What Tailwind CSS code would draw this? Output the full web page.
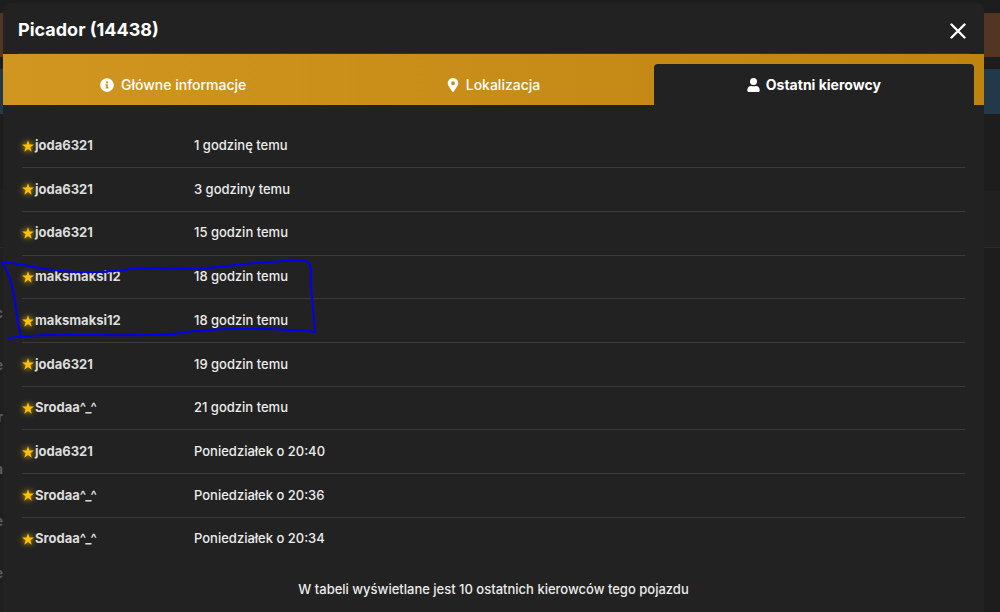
<!DOCTYPE html>
<html lang="pl">
  <head>
    <meta charset="UTF-8" />
    <meta name="viewport" content="width=device-width, initial-scale=1.0" />
    <title>Picador (14438)</title>
    <script src="https://cdn.jsdelivr.net/npm/@tailwindcss/browser@4"></script>
  </head>
  <body
    class="relative h-screen overflow-hidden bg-[#1d1d1d] font-['Inter',sans-serif] text-[13px] font-medium text-[#ececec]"
  >
    <!-- Strona pod oknem -->
    <div class="flex h-full flex-col pt-[13px]" aria-hidden="true">
      <div class="h-11 bg-[#533524]"></div>
      <div class="mt-3 h-[45px] bg-[#233848]"></div>
      <div class="mt-[77px] h-[57px] shrink-0 border-b border-[#2b2b2b] bg-[#202020]"></div>
      <div class="flex w-[3px] grow flex-col items-end gap-8 overflow-hidden bg-[#1f1f1f] pt-[55px] font-bold leading-5 text-[#5c5c5c]">
        <span>c</span>
        <span>e</span>
        <span>r</span>
        <span>a</span>
        <span>e</span>
        <span>e</span>
      </div>
    </div>

    <!-- Okno pojazdu -->
    <div
      role="dialog"
      aria-labelledby="tytul"
      class="absolute inset-y-0 left-[3px] right-4 top-[3px] flex flex-col rounded-t-lg bg-[#222222]"
    >
      <header
        class="mx-[15px] flex h-[51px] items-center justify-between border-b border-[#333333] pt-1"
      >
        <h1 id="tytul" class="text-lg font-bold text-white">Picador (14438)</h1>
        <button type="button" aria-label="Zamknij" class="p-[3px] pt-[5px] text-white">
          <svg class="size-4" viewBox="0 0 16 16" fill="none" stroke="currentColor" stroke-width="2.4" stroke-linecap="round">
            <path d="M1.5 1.5 14.5 14.5M14.5 1.5 1.5 14.5" />
          </svg>
        </button>
      </header>

      <nav
        class="grid h-[51px] grid-cols-3 bg-linear-to-r from-[#d1961f] to-[#bf840f] px-[10px] pt-[10px] text-sm text-white"
      >
        <a href="#informacje" class="flex items-center justify-center gap-[7px]">
          <svg class="size-[14px]" viewBox="0 0 512 512" fill="currentColor">
            <path
              fill-rule="evenodd"
              d="M256 8C119 8 8 119 8 256s111 248 248 248 248-111 248-248S393 8 256 8zm0 110a42 42 0 1 1 0 84 42 42 0 0 1 0-84zm56 254c0 7-5 12-12 12h-88c-7 0-12-5-12-12v-24c0-7 5-12 12-12h12v-64h-12c-7 0-12-5-12-12v-24c0-7 5-12 12-12h64c7 0 12 5 12 12v100h12c7 0 12 5 12 12z"
            />
          </svg>
          Główne informacje
        </a>
        <a href="#lokalizacja" class="flex items-center justify-center gap-[7px]">
          <svg class="h-[14px] w-[12px]" viewBox="0 0 384 512" fill="currentColor">
            <path
              fill-rule="evenodd"
              d="M172 502C27 291 0 270 0 192 0 86 86 0 192 0s192 86 192 192c0 78-27 99-172 310-10 13-30 13-40 0zm20-240a70 70 0 1 0 0-140 70 70 0 0 0 0 140z"
            />
          </svg>
          Lokalizacja
        </a>
        <a
          href="#kierowcy"
          aria-current="page"
          class="flex items-center justify-center gap-[6px] rounded-t bg-[#222222] font-bold"
        >
          <svg class="h-[14px] w-[13px]" viewBox="0 0 448 512" fill="currentColor">
            <path
              d="M224 256a128 128 0 1 0 0-256 128 128 0 0 0 0 256zm90 32h-17a174 174 0 0 1-146 0h-17C60 288 0 348 0 422v42c0 27 22 48 48 48h352c27 0 48-21 48-48v-42c0-74-60-134-134-134z"
            />
          </svg>
          Ostatni kierowcy
        </a>
      </nav>

      <main class="relative px-[19px] pt-5">
        <table class="h-[435px] w-full table-fixed">
          <tbody id="kierowcy" class="divide-y divide-[#3a3a3a]"></tbody>
        </table>

        <!-- Odręczne zaznaczenie -->
        <svg
          class="pointer-events-none absolute left-[-3px] top-[151px]"
          width="320"
          height="84"
          viewBox="0 256 320 84"
          fill="none"
          stroke="#0000f5"
          stroke-width="2"
          stroke-linecap="round"
          stroke-linejoin="round"
        >
          <path
            d="M2 263C12 262 19 264 28 266C45 269 60 272 84 272C100 272 118 272 129 269C150 267 176 269 195 269C225 267 250 263 270 262C285 261 302 259 308 262C313 265 310 279 311 288L315 332C300 330 270 329 240 329C215 329 190 331 174 334C140 336 100 335 70 335C45 335 30 335 9 338"
          />
          <path d="M2 263C10 273 13 288 15 302C17 316 18 326 21 336" />
        </svg>
      </main>

      <p class="mt-5 text-center">
        W tabeli wyświetlane jest 10 ostatnich kierowców tego pojazdu
      </p>
    </div>

    <script>
      const kierowcy = [
        ["joda6321", "1 godzinę temu"],
        ["joda6321", "3 godziny temu"],
        ["joda6321", "15 godzin temu"],
        ["maksmaksi12", "18 godzin temu"],
        ["maksmaksi12", "18 godzin temu"],
        ["joda6321", "19 godzin temu"],
        ["Srodaa^_^", "21 godzin temu"],
        ["joda6321", "Poniedziałek o 20:40"],
        ["Srodaa^_^", "Poniedziałek o 20:36"],
        ["Srodaa^_^", "Poniedziałek o 20:34"],
      ];

      document.getElementById("kierowcy").innerHTML = kierowcy
        .map(
          ([nick, czas]) => `
          <tr>
            <th scope="row" class="w-[172px] text-left font-bold text-[#dcdcdc]">
              <span class="flex items-center gap-px">
                <svg class="size-3 overflow-visible drop-shadow-[0_0_3px_#ffc107]" viewBox="0 0 22 21" fill="#ffc107">
                  <path d="M11 0l2.7 7.9H22l-6.6 5 2.4 8.1L11 16.1 4.2 21l2.4-8.1L0 7.9h8.3z" />
                </svg>
                ${nick}
              </span>
            </th>
            <td>${czas}</td>
          </tr>`
        )
        .join("");
    </script>
  </body>
</html>
